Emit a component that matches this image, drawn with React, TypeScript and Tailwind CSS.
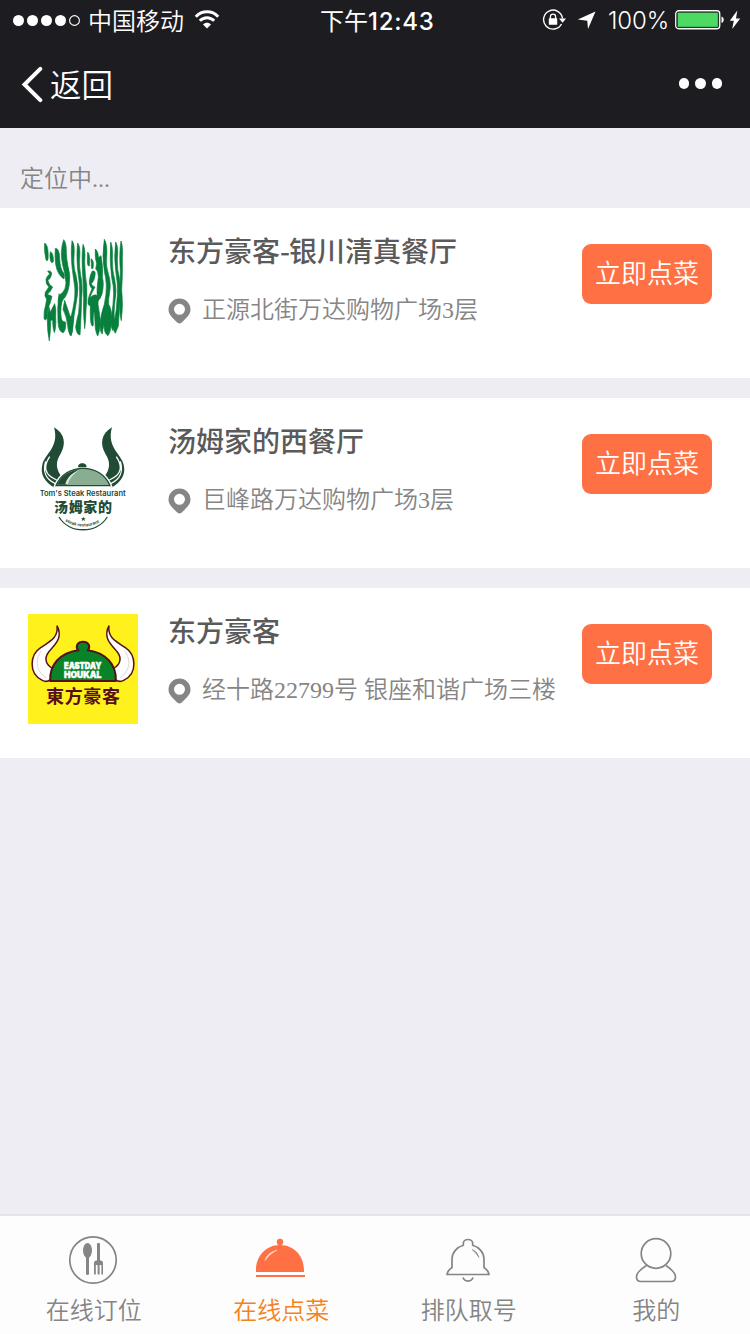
import type { ReactNode } from "react";

const CJK = "font-['Noto_Sans_CJK_SC',sans-serif]";
const MIXED = "font-['Liberation_Serif','Noto_Sans_CJK_SC',sans-serif]";
const LATIN = "font-['Inter','Noto_Sans_CJK_SC',sans-serif]";

function StatusBar() {
  return (
    <div className={`relative flex h-10 items-center text-white ${LATIN}`}>
      <svg className="ml-3 h-3 w-[69px]" viewBox="0 0 69 12">
        {[6.5, 20.5, 34.5, 48.5].map((x) => (
          <circle key={x} cx={x} cy="6.5" r="5.5" fill="#fff" />
        ))}
        <circle cx="62.5" cy="6.5" r="4.9" fill="none" stroke="#fff" strokeWidth="1.1" />
      </svg>
      <span className={`ml-[7px] text-[24px] leading-10 font-[350] ${CJK}`}>中国移动</span>
      <svg className="ml-[10px] h-5 w-[26px]" viewBox="0 0 26 20" fill="none" stroke="#fff" strokeWidth="3">
        <path d="M1.8 6.7C8 .2 18 .2 24.2 6.7" />
        <path d="M5.8 10.8C10 6.7 16 6.7 20.2 10.8" />
        <path d="M9 14.5c2.3-2.3 5.7-2.3 8 0l-4 4z" fill="#fff" stroke="none" />
      </svg>
      <span className="absolute top-0 left-[320px] text-[24px] leading-[39px] font-medium tracking-[0.75px] whitespace-nowrap">
        <span className={`font-normal tracking-normal ${CJK}`}>下午</span>12:43
      </span>
      <div className="ml-auto flex items-center pr-[9px]">
        <svg className="h-[22px] w-[25px]" viewBox="0 0 25 22" fill="none">
          <path d="M19.5 15A9.5 9.5 0 1 1 20.5 9.5" stroke="#fff" strokeWidth="1.4" />
          <path d="M17 9.500h7l-3.400 4.200z" fill="#fff" />
          <rect x="6.800" y="9.300" width="8.400" height="6.500" rx=".5" fill="#fff" />
          <path d="M8.400 10V7.800a2.600 2.600 0 0 1 5.200 0V10" stroke="#fff" strokeWidth="1.300" />
        </svg>
        <svg className="ml-[10px] h-[19px] w-[19px]" viewBox="0 0 19 19">
          <path d="M18.500.5 11 18 10.300 9.700.8 8.600z" fill="#fff" />
        </svg>
        <span className="ml-[12px] w-[62px] pt-px text-[24px] leading-[42px] font-light tracking-[-0.1px] whitespace-nowrap">100%</span>
        <svg className="ml-[5px] h-5 w-[50px]" viewBox="0 0 50 20">
          <rect x=".75" y=".75" width="44" height="18" rx="3" fill="none" stroke="#fff" strokeWidth="1.300" />
          <rect x="2.300" y="2.300" width="41" height="15" rx="1" fill="#4cd964" stroke="#1d1c21" strokeWidth=".7" />
          <path d="M46.500 6.500c3 .7 3 5.800 0 6.500z" fill="#fff" />
        </svg>
        <svg className="ml-[4px] h-5 w-3" viewBox="0 0 12 20">
          <path d="M8.300.5.8 10.700h4L3.200 19 11.200 8.400H7z" fill="#fff" />
        </svg>
      </div>
    </div>
  );
}

function NavBar() {
  return (
    <div className="flex h-[88px] items-center justify-between pr-7 pl-5 text-white">
      <div className="flex items-center">
        <svg className="h-[38px] w-6" viewBox="0 0 24 38" fill="none">
          <path d="M20.300 3.800 4.500 19.500l15.800 15.700" stroke="#fff" strokeWidth="4" strokeLinecap="round" />
        </svg>
        <span className={`ml-[6px] pb-[2px] text-[31.500px] leading-[44px] font-[350] ${CJK}`}>返回</span>
      </div>
      <div className="flex gap-[6px] pb-px">
        <i className="size-[10.500px] rounded-full bg-white" />
        <i className="size-[10.500px] rounded-full bg-white" />
        <i className="size-[10.500px] rounded-full bg-white" />
      </div>
    </div>
  );
}

function CalligraphyLogo() {
  return (
    <svg className="size-[110px]" viewBox="24 27 330 330" fill="#087f3c" stroke="#087f3c" strokeWidth="2">
      <path d="M74 54Q87 62 84 104Q80 110 78 104Q72 80 74 54zM91 80Q101 84 100 110Q95 117 92 108Q88 96 91 80z" />
      <path d="M106 70Q118 70 119 100Q120 132 131 144Q135 150 132 162Q112 150 107 118Q104 92 106 70z" />
      <path d="M131 44Q140 54 139 84Q140 104 144 124Q153 152 147 184Q142 212 129 224Q124 232 122 244Q114 240 115 222Q117 208 127 203Q137 194 138 174Q136 146 128 120Q119 78 131 44z" />
      <path d="M83 138Q95 136 95 147Q93 160 84 166Q86 180 98 186Q91 202 82 208L96 214Q91 236 84 250L82 278Q76 290 72 280Q71 257 77 240L80 222Q72 214 76 202Q82 192 87 186Q76 177 78 163Q81 152 89 147z" />
      <path d="M86 244Q93 258 92 296Q91 325 88 348Q82 321 82 285zM104 236Q109 251 107 275Q109 307 103 323Q98 309 98 286L86 284Q88 262 104 236z" />
      <path d="M117 206Q127 220 123 248Q121 278 127 288L137 292Q138 316 130 323Q116 322 114 291Q111 248 117 206zM134 226L147 264Q151 281 160 273Q159 302 154 332Q145 326 143 302Q140 274 129 253z" />
      <path d="M156 47Q165 57 162 94Q160 129 168 150Q178 190 170 226Q161 270 157 321L151 332Q145 321 150 289Q160 251 164 220Q167 192 161 163Q150 98 156 47z" />
      <path d="M173 54Q182 66 179 99Q177 122 182 151Q189 178 185 220Q183 285 180 330Q169 328 167 306Q169 290 176 263Q181 216 178 174Q167 102 173 54z" />
      <path d="M189 58Q197 72 194 110Q195 151 200 180Q202 220 198 255Q197 292 194 311Q189 264 191 220Q190 175 187 132Q185 88 189 58z" />
      <path d="M203 81Q211 87 208 123Q202 125 202 106zM213 101Q223 106 219 130Q213 136 214 116zM226 72Q236 80 235 98L243 92Q250 125 247 157Q253 178 246 207Q242 222 232 230Q229 190 235 157Q234 135 227 132L230 116Q224 99 226 72z" />
      <path d="M216 139Q228 135 225 151Q223 169 214 176Q216 183 225 186Q214 204 209 220Q220 207 229 210Q236 215 234 238L241 284Q240 320 233 333Q225 319 225 291L223 257Q218 274 220 301Q215 309 212 289Q210 260 211 244L204 238Q203 223 208 211Q214 196 216 191Q207 183 208 168Q210 151 216 139z" />
      <path d="M253 43Q263 59 260 98Q257 122 265 146Q274 171 269 202Q265 223 266 238Q277 256 274 289Q273 322 264 332Q251 325 252 297Q248 313 247 327Q240 321 240 301Q243 264 253 238Q260 205 259 180Q258 159 253 139Q245 92 253 43z" />
      <path d="M272 51Q279 64 277 104Q277 138 284 163Q291 197 285 227Q280 264 284 294L279 317Q271 308 274 276Q280 240 281 207Q281 181 275 158Q268 103 272 51zM287 51Q296 67 292 100Q291 133 298 159Q305 200 299 237Q297 274 295 303L286 325Q279 319 282 296Q291 251 292 211Q294 177 288 145Q281 99 287 51zM303 48Q309 60 307 102Q308 154 305 194Q310 240 304 287Q298 270 300 226Q300 171 301 138Q297 84 303 48z" />
    </svg>
  );
}

function SteakLogo() {
  return (
    <svg className="size-[110px]" viewBox="24 27 330 330">
      <g fill="#214b34">
        <path d="M102 37c34 20 36 51 20 79-14 22-18 44 6 73-11 8-18 19-24 29-31-18-44-41-37-69 7-32 52-52 35-112z" />
        <path d="M276 37c-34 20-36 51-20 79 14 22 18 44-6 73 11 8 18 19 24 29 31-18 44-41 37-69-7-32-52-52-35-112z" />
      </g>
      <g fill="none" stroke="#fff" strokeWidth="4">
        <path d="M89 125c-19 29-18 54 21 70M77 139c-9 31-2 52 29 67" />
        <path d="M289 125c19 29 18 54-21 70M301 139c9 31 2 52-29 67" />
      </g>
      <path d="M108 212h162c-13-32-43-52-81-52s-68 20-81 52z" fill="#88ad91" stroke="#fff" strokeWidth="12" />
      <path d="M108 212h162c-13-32-43-52-81-52s-68 20-81 52z" fill="#88ad91" stroke="#214b34" strokeWidth="4" />
      <path d="M112 209c12-25 30-38 66-46-22 13-33 25-36 46z" fill="#214b34" />
      <path d="M136 208c4-19 18-33 42-44-19 15-31 26-34 44z" fill="#d7e6d8" />
      <path d="M175 157c-3-6 4-12 12-12s15 6 12 12z" fill="#214b34" />
      <text x="188" y="244" textAnchor="middle" textLength="258" lengthAdjust="spacingAndGlyphs" fontFamily="Inter" fontSize="22" fontWeight="600" fill="#214b34">Tom's Steak Restaurant</text>
      <text x="189" y="292" textAnchor="middle" textLength="174" fontFamily="Noto Sans CJK SC" fontSize="42" fontWeight="900" fill="#214b34">汤姆家的</text>
      <path d="M117 306c31 51 113 51 145 0" fill="none" stroke="#214b34" strokeWidth="4" />
      <path id="steak-curve" d="M135 319q54 31 110 0" fill="none" />
      <text fontFamily="Inter" fontSize="13" fontWeight="700" fill="#214b34">
        <textPath href="#steak-curve" textLength="108">steak restaurant</textPath>
      </text>
      <path d="M190 305l2 5h5l-4 3 2 5-5-3-5 3 2-5-4-3h5z" fill="#214b34" />
    </svg>
  );
}

function EastdayLogo() {
  return (
    <svg className="size-[110px]" viewBox="24 27 330 330">
      <path d="M24 27h330v330H24z" fill="#fff21c" />
      <g fill="#fff" stroke="#551018" strokeWidth="4.500">
        <path d="M111 62c5 34-18 46-49 66-31 20-39 77 5 98 9 5 18 3 24-2 0-14 3-24 7-34-20-10-27-29-12-49 16-20 45-41 25-79z" />
        <path d="M267 62c-5 34 18 46 49 66 31 20 39 77-5 98-9 5-18 3-24-2 0-14-3-24-7-34 20-10 27-29 12-49-16-20-45-41-25-79z" />
      </g>
      <path d="M64 138c-20 28-16 60 14 80M314 138c20 28 16 60-14 80" fill="none" stroke="#e2d3d0" strokeWidth="3" />
      <path d="M91 228c-4-49 30-84 83-92-9-14 0-26 15-26s24 12 15 26c53 8 87 43 83 92z" fill="#078427" stroke="#551018" strokeWidth="6" />
      <g fill="#fff" stroke="#fff" strokeWidth="1.500" fontFamily="Inter" fontWeight="900" textAnchor="middle">
        <text x="188" y="193" fontSize="26" textLength="112" lengthAdjust="spacingAndGlyphs">EASTDAY</text>
        <text x="188" y="219" fontSize="27" textLength="112" lengthAdjust="spacingAndGlyphs">HOUKAL</text>
      </g>
      <text x="189" y="294" textAnchor="middle" textLength="222" fontFamily="Noto Sans CJK TC" fontSize="54" fontWeight="700" fill="#551018">東方豪客</text>
    </svg>
  );
}

function Pin() {
  return (
    <svg className="h-[26px] w-[23px]" viewBox="0 0 23 26">
      <path fillRule="evenodd" d="M11.500.5a11 11 0 0 1 11 11c0 5.500-4.500 8.500-8 12.300-1.900 2.200-4.100 2.200-6 0C5 20 .5 17 .5 11.500a11 11 0 0 1 11-11zm0 5.300a5.500 5.500 0 1 0 0 11 5.500 5.500 0 0 0 0-11z" fill="#858585" />
    </svg>
  );
}

function Restaurant({ logo, name, address }: { logo: ReactNode; name: string; address: string }) {
  const [head, tail] = name.split("-");
  return (
    <li className="flex h-[170px] bg-white pr-[38px] pl-7">
      <div className="mt-[26px] shrink-0">{logo}</div>
      <div className="ml-[30px] flex-1 whitespace-nowrap">
        <h2 className={`mt-[22px] text-[28px] leading-10 font-medium text-[#5a5a5a] ${CJK}`}>
          {head}
          {tail && <span className="-mr-px">-</span>}
          {tail}
        </h2>
        <p className="mt-5 flex h-10 items-center text-[24px] leading-10 font-[350] text-[#858585]">
          <span className="pt-px">
            <Pin />
          </span>
          <span className={`ml-[11px] ${MIXED}`}>{address}</span>
        </p>
      </div>
      <button className={`mt-9 h-[60px] w-[130px] shrink-0 rounded-[9px] bg-[#ff7144] pb-[5px] text-[26px] font-[350] text-white ${CJK}`}>
        立即点菜
      </button>
    </li>
  );
}

function CutleryIcon() {
  return (
    <svg className="size-[50px]" viewBox="0 0 50 50" fill="#858585">
      <circle cx="25" cy="25" r="23.200" fill="none" stroke="#858585" strokeWidth="1.700" />
      <ellipse cx="19.500" cy="15.500" rx="4.500" ry="7.500" />
      <rect x="18" y="20" width="3" height="20" rx="1.500" />
      <rect x="29" y="8" width="3" height="19" rx="1" />
      <path d="M26 39.500V28q0-2.500 2.500-2.500h4Q35 25.500 35 28v11.500h-1.600V30h-1.800v9.500h-2V30h-1.800v9.500z" />
    </svg>
  );
}

function ClocheIcon() {
  return (
    <svg className="size-[50px]" viewBox="0 0 50 50">
      <circle cx="25" cy="7" r="3.200" fill="#ff7144" />
      <path d="M1 37v-2c0-14 10-25 24-25s24 11 24 25v2zM1 40h50v2H1z" fill="#ff7144" />
      <path d="M10 25.500q2-7.500 12-10.500-8 4-12 10.500z" fill="#ffede6" stroke="#ffede6" strokeWidth=".5" />
    </svg>
  );
}

function BellIcon() {
  return (
    <svg className="size-[50px]" viewBox="0 0 50 50" fill="none" stroke="#858585" strokeWidth="1.700">
      <path d="M20.300 10.200V8.500a4.700 4 0 0 1 9.400 0v1.700C36 12 41 17.500 41 24v8.500c2 1.500 4.500 3 5 7H4c.5-4 3-5.500 5-7V24c0-6.500 5-12 11.300-13.800zM20 42.500c1.500 4.700 8.500 4.700 10 0" />
      <path d="M29 14.500q5.500 2 7 8-3-5-7-8z" fill="#858585" strokeWidth=".6" />
    </svg>
  );
}

function PersonIcon() {
  return (
    <svg className="size-[50px]" viewBox="0 0 50 50" fill="none" stroke="#858585" strokeWidth="1.700">
      <circle cx="26" cy="18.500" r="14.800" />
      <path d="M16.500 30.500C10 34.500 6.500 38.500 6.500 42Q6.500 46.500 11 46.500h30q4.500 0 4.500-4.500c0-3.500-3.500-7.500-9.500-11.500" />
    </svg>
  );
}

function Tab({ icon, label, active = false }: { icon: ReactNode; label: string; active?: boolean }) {
  return (
    <div className={`flex flex-1 flex-col items-center pt-[19px] text-[24px] leading-[36px] font-[350] ${CJK} ${active ? "text-[#f58220]" : "text-[#858585]"}`}>
      <span className="-ml-[2px]">{icon}</span>
      <span className="mt-[6px]">{label}</span>
    </div>
  );
}

export default function App() {
  return (
    <div className="flex h-[1334px] w-[750px] flex-col overflow-hidden bg-[#eeedf3]">
      <header className="h-32 bg-[#1d1c21]">
        <StatusBar />
        <NavBar />
      </header>
      <main className="flex-1">
        <p className={`h-20 pl-5 text-[24px] leading-[102px] font-[350] text-[#858585] ${MIXED}`}>定位中...</p>
        <ul className="flex flex-col gap-5">
          <Restaurant logo={<CalligraphyLogo />} name="东方豪客-银川清真餐厅" address="正源北街万达购物广场3层" />
          <Restaurant logo={<SteakLogo />} name="汤姆家的西餐厅" address="巨峰路万达购物广场3层" />
          <Restaurant logo={<EastdayLogo />} name="东方豪客" address="经十路22799号 银座和谐广场三楼" />
        </ul>
      </main>
      <nav className="flex h-[120px] border-t-2 border-[#e4e3e8] bg-[#fdfdfd]">
        <Tab icon={<CutleryIcon />} label="在线订位" />
        <Tab icon={<ClocheIcon />} label="在线点菜" active />
        <Tab icon={<BellIcon />} label="排队取号" />
        <Tab icon={<PersonIcon />} label="我的" />
      </nav>
    </div>
  );
}
